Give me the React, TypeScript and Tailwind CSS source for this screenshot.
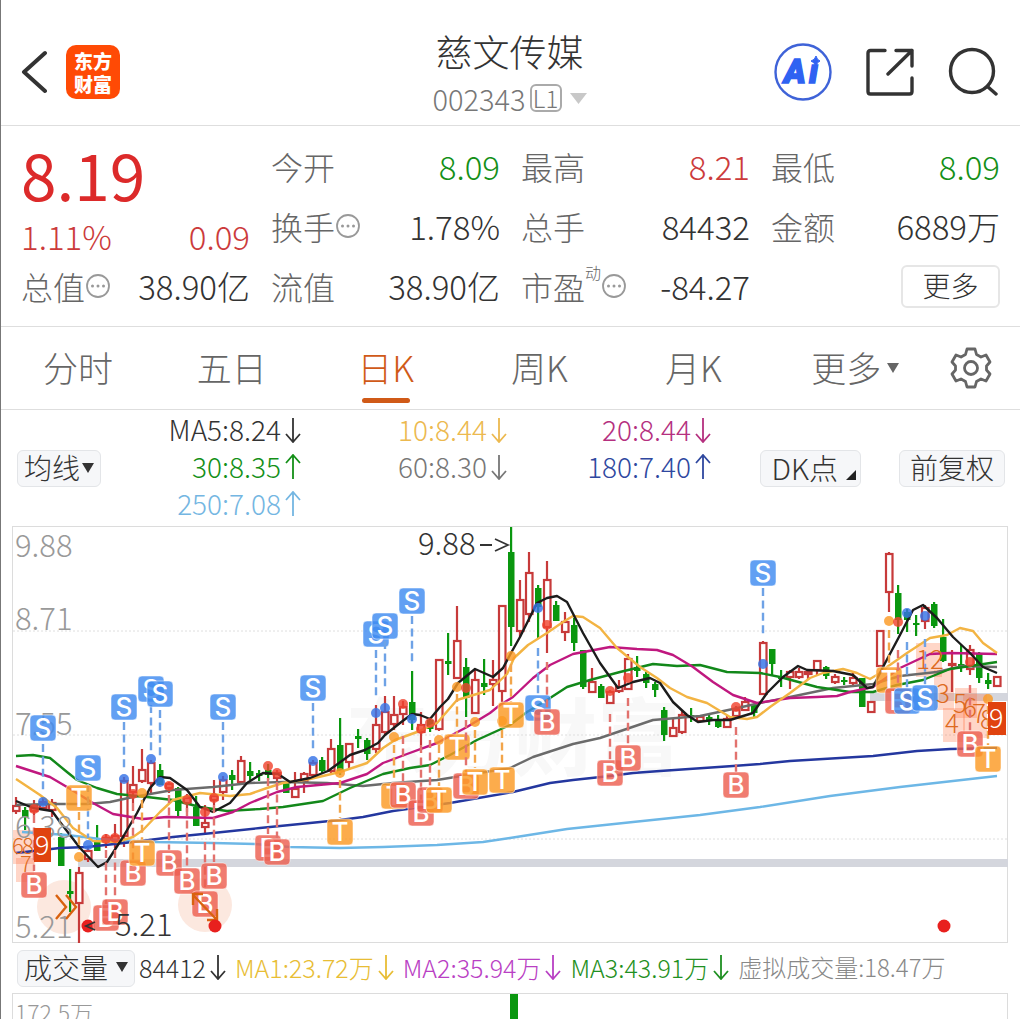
import React from "react";

const FONT = "font-['Noto_Sans_CJK_SC',sans-serif]";

/* ---------- chart data ---------- */

type Kind = "r" | "g";
// x, high, body top, body bottom, low, colour
type Candle = [number, number, number, number, number, Kind];

const candles: Candle[] = [
  [16, 797, 806, 811, 814, "r"],
  [25, 807, 810, 817, 830, "g"],
  [34, 800, 806, 811, 815, "r"],
  [43, 797, 802, 808, 810, "r"],
  [52, 799, 803, 810, 817, "r"],
  [61, 833, 837, 866, 866, "g"],
  [70, 869, 891, 894, 912, "g"],
  [79, 867, 873, 903, 943, "r"],
  [88, 848, 851, 859, 862, "r"],
  [97, 825, 842, 851, 851, "g"],
  [106, 834, 838, 841, 848, "r"],
  [115, 824, 836, 840, 848, "r"],
  [124, 777, 781, 836, 847, "r"],
  [133, 766, 785, 792, 803, "r"],
  [142, 749, 770, 781, 783, "r"],
  [151, 760, 763, 783, 793, "r"],
  [160, 764, 770, 785, 785, "g"],
  [169, 782, 784, 788, 793, "r"],
  [178, 787, 788, 811, 816, "g"],
  [187, 794, 798, 803, 812, "r"],
  [196, 796, 807, 826, 826, "g"],
  [205, 805, 823, 827, 834, "r"],
  [214, 780, 796, 800, 805, "r"],
  [223, 776, 780, 792, 800, "r"],
  [232, 770, 775, 780, 790, "g"],
  [241, 756, 761, 782, 783, "r"],
  [250, 762, 771, 776, 780, "g"],
  [259, 770, 773, 776, 781, "g"],
  [268, 764, 770, 775, 780, "g"],
  [277, 770, 773, 778, 782, "r"],
  [286, 782, 783, 793, 793, "g"],
  [295, 772, 789, 797, 798, "r"],
  [304, 772, 774, 781, 793, "r"],
  [313, 760, 763, 775, 778, "r"],
  [322, 757, 760, 771, 773, "g"],
  [331, 739, 749, 771, 773, "r"],
  [340, 718, 745, 772, 775, "g"],
  [349, 743, 744, 762, 768, "r"],
  [358, 729, 736, 739, 748, "g"],
  [367, 738, 740, 754, 760, "g"],
  [376, 705, 725, 749, 753, "r"],
  [385, 696, 712, 732, 736, "r"],
  [394, 696, 715, 724, 730, "r"],
  [403, 701, 707, 714, 725, "r"],
  [412, 671, 702, 720, 730, "g"],
  [421, 712, 725, 732, 745, "r"],
  [430, 718, 720, 729, 732, "g"],
  [439, 659, 660, 729, 731, "r"],
  [448, 633, 661, 664, 675, "g"],
  [457, 606, 641, 678, 679, "r"],
  [466, 658, 667, 698, 717, "g"],
  [475, 670, 680, 713, 714, "r"],
  [484, 659, 683, 687, 695, "g"],
  [493, 660, 680, 684, 706, "r"],
  [502, 605, 606, 691, 702, "r"],
  [511, 527, 552, 627, 646, "g"],
  [520, 580, 600, 631, 637, "r"],
  [529, 552, 573, 614, 622, "r"],
  [538, 585, 588, 607, 638, "g"],
  [547, 561, 580, 627, 653, "r"],
  [556, 601, 605, 621, 621, "g"],
  [565, 612, 622, 632, 641, "r"],
  [574, 618, 625, 643, 651, "g"],
  [583, 650, 650, 687, 689, "g"],
  [592, 668, 682, 692, 693, "r"],
  [601, 684, 686, 698, 698, "g"],
  [610, 690, 692, 703, 704, "r"],
  [619, 680, 687, 691, 693, "r"],
  [628, 654, 659, 689, 690, "r"],
  [637, 656, 667, 671, 677, "g"],
  [646, 672, 674, 683, 688, "g"],
  [655, 682, 684, 690, 697, "g"],
  [664, 707, 710, 735, 741, "g"],
  [673, 718, 728, 736, 736, "r"],
  [682, 710, 715, 732, 734, "r"],
  [691, 708, 715, 717, 722, "g"],
  [700, 715, 717, 721, 722, "r"],
  [709, 715, 717, 720, 725, "g"],
  [718, 715, 721, 727, 728, "g"],
  [727, 716, 719, 727, 728, "r"],
  [736, 706, 710, 716, 717, "r"],
  [745, 697, 702, 710, 711, "r"],
  [754, 704, 705, 713, 718, "g"],
  [763, 641, 643, 694, 695, "r"],
  [772, 649, 649, 664, 675, "g"],
  [781, 670, 677, 679, 687, "g"],
  [790, 670, 672, 677, 689, "r"],
  [799, 668, 672, 677, 679, "r"],
  [808, 670, 672, 674, 680, "r"],
  [817, 660, 661, 670, 676, "r"],
  [826, 666, 667, 676, 679, "g"],
  [835, 674, 677, 682, 684, "r"],
  [844, 677, 680, 682, 685, "g"],
  [853, 672, 678, 683, 685, "r"],
  [862, 678, 678, 707, 707, "g"],
  [871, 701, 702, 712, 713, "r"],
  [880, 630, 631, 666, 667, "r"],
  [889, 552, 554, 592, 612, "r"],
  [898, 585, 593, 620, 634, "g"],
  [907, 609, 612, 620, 632, "g"],
  [916, 615, 623, 625, 636, "g"],
  [925, 605, 608, 621, 629, "r"],
  [934, 602, 604, 626, 628, "g"],
  [943, 619, 637, 661, 662, "g"],
  [952, 650, 664, 665, 692, "r"],
  [961, 645, 664, 667, 672, "g"],
  [970, 645, 650, 669, 675, "r"],
  [979, 652, 653, 678, 683, "g"],
  [988, 673, 680, 684, 689, "g"],
  [997, 676, 677, 686, 687, "r"],
];

const averages: { color: string; points: string }[] = [
  {
    color: "#6db7e6",
    points:
      "22,832 67,835 100,839 153,842 213,843 255,844 290,847 340,848 383,847 437,845 483,842 510,838 567,829 633,822 700,815 760,807 830,796 900,787 997,776",
  },
  {
    color: "#24379f",
    points:
      "16,853 60,848 87,847 133,842 173,837 213,833 260,828 290,825 340,820 363,817 393,811 450,803 513,792 550,783 573,780 610,776 633,773 660,771 733,766 760,764 790,761 873,756 917,751 950,749 997,748",
  },
  {
    color: "#6b6b6b",
    points:
      "16,805 50,804 87,804 110,802 133,797 173,790 213,787 250,783 283,782 327,783 363,786 393,783 437,780 510,768 533,757 573,744 600,738 653,720 700,716 733,709 760,703 790,697 833,688 873,684 900,676 937,672 963,666 997,667",
  },
  {
    color: "#12881a",
    points:
      "16,756 33,755 50,758 67,772 77,780 97,788 117,794 147,797 173,800 200,807 227,811 260,809 283,807 303,804 323,801 350,788 383,774 410,768 430,765 450,755 477,740 510,725 527,712 547,700 567,687 590,680 620,672 653,664 677,666 700,665 727,672 760,673 780,677 817,687 850,692 873,692 897,685 923,680 950,669 977,665 997,662",
  },
  {
    color: "#c0187f",
    points:
      "16,766 50,777 67,787 93,803 113,814 143,819 167,817 213,818 233,812 250,803 277,792 297,787 340,783 367,774 383,763 407,754 437,743 467,727 490,713 500,705 513,697 533,678 550,665 573,654 610,647 637,649 657,650 673,655 693,667 713,682 733,695 757,703 790,698 817,697 837,696 850,692 873,687 883,680 900,668 930,654 950,653 997,654",
  },
  {
    color: "#f3b443",
    points:
      "16,779 40,795 57,808 73,828 93,841 117,842 133,837 143,830 160,812 173,800 200,793 230,796 250,794 267,788 283,783 310,779 340,772 367,763 383,748 395,740 417,732 437,723 457,700 490,690 507,674 514,658 528,645 547,633 563,622 573,616 583,617 600,628 617,648 640,667 657,678 670,688 687,697 707,703 730,717 747,719 757,717 770,707 790,693 810,678 823,673 843,669 857,673 870,679 880,673 887,667 907,653 930,638 947,635 960,628 973,631 983,643 997,653",
  },
  {
    color: "#1c1c1c",
    points:
      "16,801 33,808 52,811 60,822 80,848 98,867 107,862 123,837 137,813 150,788 160,777 170,778 187,790 200,807 213,812 230,803 247,783 263,773 278,774 290,782 310,778 328,771 350,755 365,750 378,743 385,735 400,723 412,714 420,715 430,719 440,707 448,699 458,683 475,669 493,677 503,668 511,653 520,637 537,603 547,598 557,596 567,602 583,633 600,663 618,688 633,682 650,678 660,683 673,702 687,715 698,722 713,720 730,720 753,713 760,703 767,693 783,677 798,666 807,670 833,671 853,675 867,688 873,687 883,667 900,635 913,610 923,605 937,618 953,637 970,653 983,667 997,673",
  },
];

type Mark = "S" | "T" | "B";
const markFill: Record<Mark, string> = { S: "#3f8bf0", T: "#fb9a24", B: "#ed5f50" };
const dashStroke: Record<Mark, string> = { S: "#6ea2e6", T: "#f2a54a", B: "#e2726e" };

// letter, x, centre y of the badge, start and end of its dashed leader
type MarkRow = [Mark, number, number, number, number];
const marks: MarkRow[] = [
  ["S", 43, 728, 744, 790],
  ["S", 88, 768, 784, 838],
  ["S", 124, 707, 722, 768],
  ["S", 151, 689, 705, 751],
  ["S", 160, 694, 710, 756],
  ["S", 223, 707, 722, 768],
  ["S", 313, 688, 703, 749],
  ["S", 376, 634, 650, 696],
  ["S", 385, 626, 641, 687],
  ["S", 412, 601, 616, 662],
  ["S", 538, 708, 648, 694],
  ["S", 763, 573, 588, 634],
  ["T", 79, 798, 812, 850],
  ["B", 34, 885, 815, 871],
  ["B", 106, 918, 850, 904],
  ["B", 115, 912, 850, 898],
  ["B", 133, 873, 803, 860],
  ["T", 142, 853, 800, 840],
  ["B", 169, 863, 795, 850],
  ["B", 187, 881, 808, 868],
  ["B", 205, 904, 842, 890],
  ["B", 214, 876, 805, 862],
  ["B", 268, 848, 778, 834],
  ["B", 277, 852, 782, 838],
  ["T", 340, 832, 780, 818],
  ["T", 394, 796, 745, 783],
  ["B", 403, 795, 736, 782],
  ["B", 421, 813, 745, 800],
  ["B", 430, 800, 740, 786],
  ["T", 439, 800, 745, 786],
  ["T", 457, 747, 694, 734],
  ["B", 466, 786, 720, 772],
  ["T", 475, 782, 730, 768],
  ["T", 502, 780, 730, 766],
  ["T", 511, 715, 664, 702],
  ["B", 547, 722, 662, 708],
  ["B", 610, 773, 714, 760],
  ["B", 628, 758, 698, 744],
  ["B", 736, 785, 727, 772],
  ["T", 889, 680, 630, 666],
  ["B", 898, 701, 650, 688],
  ["S", 907, 701, 642, 688],
  ["S", 925, 698, 639, 685],
];
const lastMarks: MarkRow[] = [
  ["B", 970, 744, 685, 731],
  ["T", 988, 759, 706, 745],
];

const dots: [number, number, Mark][] = [
  [34, 809, "B"], [43, 802, "S"], [79, 857, "T"], [88, 845, "S"], [106, 839, "B"], [115, 838, "B"],
  [124, 779, "S"], [133, 794, "B"], [142, 793, "T"], [151, 759, "S"], [160, 782, "S"], [169, 786, "B"],
  [187, 800, "B"], [205, 812, "B"], [214, 798, "B"], [223, 777, "S"], [268, 766, "B"], [277, 773, "B"],
  [313, 761, "S"], [340, 773, "T"], [376, 713, "S"], [385, 708, "S"], [394, 737, "T"], [403, 704, "B"],
  [412, 719, "S"], [421, 729, "B"], [430, 723, "B"], [439, 740, "T"], [457, 687, "T"], [466, 688, "B"],
  [475, 722, "T"], [502, 721, "T"], [511, 656, "T"], [538, 608, "S"], [547, 625, "B"], [610, 691, "B"],
  [628, 678, "B"], [736, 707, "B"], [763, 664, "S"], [889, 621, "T"], [898, 622, "B"], [907, 613, "S"],
  [925, 616, "S"], [970, 662, "B"], [988, 699, "T"],
];

const counts: [string, number, number][] = [
  ["12", 916, 669], ["3", 936, 703], ["4", 945, 733], ["5", 953, 713], ["6", 963, 717], ["7", 972, 723], ["8", 980, 729],
];

function Badge({ mark }: { mark: MarkRow }) {
  const [k, x, y, from, to] = mark;
  return (
    <g>
      <line x1={x} x2={x} y1={from} y2={to} stroke={dashStroke[k]} strokeWidth="2.4" strokeDasharray="8 4.4" />
      <rect x={x - 13} y={y - 13} width="26" height="26" rx="4" fill={markFill[k]} fillOpacity="0.82" stroke="#fff" strokeOpacity="0.5" />
      <text x={x} y={y + 9} fontSize="26" textAnchor="middle" fill="#fff" className="font-['Inter',sans-serif] font-medium">
        {k}
      </text>
    </g>
  );
}

function KLineChart() {
  return (
    <svg viewBox="12 526 996 417" className="block h-auto w-full" role="img" aria-label="日K">
      <text x="345" y="769" fontSize="84" fill="#f8f8f8" className="font-bold">东方财富</text>
      {[631, 735, 839].map((y) => (
        <line key={y} x1="13" x2="1008" y1={y} y2={y} stroke="#dedede" strokeDasharray="2 2" />
      ))}
      <rect x="12.5" y="526.5" width="995" height="416" fill="none" stroke="#dcdcdc" />
      <rect x="78" y="859" width="930" height="8" fill="#d4d6dd" />
      <rect x="870" y="693" width="138" height="8" fill="#d4d6dd" />
      <circle cx="64" cy="907" r="27" fill="#fce8df" />
      <circle cx="205" cy="905" r="27" fill="#fce8df" />

      <g fill="#ff6a3a" fillOpacity="0.28">
        <rect x="13" y="830" width="22" height="34" />
        <rect x="16" y="858" width="18" height="24" />
        <rect x="916" y="643" width="26" height="34" />
        <rect x="934" y="670" width="20" height="40" />
        <rect x="943" y="708" width="22" height="34" />
        <rect x="955" y="688" width="22" height="30" />
        <rect x="963" y="694" width="24" height="44" />
      </g>

      {candles.map(([x, hi, top, bot, lo, k]) =>
        k === "g" ? (
          <g key={x} fill="#0a970f">
            <rect x={x - 1} y={hi} width="2.2" height={lo - hi} />
            <rect x={x - 3} y={top} width="6.5" height={bot - top} />
          </g>
        ) : (
          <g key={x} stroke="#c73a3a" fill="#fff" strokeWidth="2.2">
            <line x1={x} x2={x} y1={hi} y2={lo} />
            <rect x={x - 3} y={top} width="6.5" height={bot - top} />
          </g>
        ),
      )}

      {averages.map((a) => (
        <polyline key={a.color} points={a.points} fill="none" stroke={a.color} strokeWidth="2.4" strokeLinejoin="round" />
      ))}

      <g fontSize="31" fill="#999" className="font-light">
        <text x="15" y="557">9.88</text>
        <text x="15" y="630">8.71</text>
        <text x="15" y="735">7.55</text>
        <text x="15" y="838">6.38</text>
        <text x="15" y="938">5.21</text>
      </g>

      {dots.map(([x, y, k]) => (
        <circle
          key={x}
          cx={x}
          cy={y}
          r="5"
          fillOpacity="0.82"
          fill={k === "S" ? "#3673e6" : k === "T" ? "#fb9a24" : "#f0442f"}
        />
      ))}

      <circle cx="88" cy="926" r="6.5" fill="#e8201e" />
      {marks.map((m) => (
        <Badge key={m[0] + m[1]} mark={m} />
      ))}

      <g fontSize="26" fill="#dd6a20" className="font-light">
        <text x="12" y="854" fontSize="22">6</text>
        <text x="22" y="854" fontSize="22">8</text>
        <text x="20" y="872" fontSize="22">7</text>
        {counts.map(([t, x, y]) => (
          <text key={t} x={x} y={y}>{t}</text>
        ))}
      </g>
      {lastMarks.map((m) => (
        <Badge key={m[0] + m[1]} mark={m} />
      ))}
      <rect x="34" y="828" width="17" height="34" fill="#e0430f" />
      <rect x="988" y="702" width="18" height="33" fill="#e0430f" />
      <g fontSize="27" fill="#fff">
        <text x="35" y="855">9</text>
        <text x="989" y="728">9</text>
      </g>

      <g fill="none" stroke="#d9620f" strokeWidth="2.4">
        <path d="M56 895 66 907 56 919M66 895 76 907 66 919" />
        <path d="M193 895 217 920M193 905V894H203M217 909V920H207" />
      </g>
      <circle cx="215" cy="926" r="6.5" fill="#e8201e" />
      <circle cx="944" cy="926" r="6.5" fill="#e8201e" />

      <g fontSize="31" fill="#333" className="font-light">
        <text x="418" y="555">9.88</text>
        <path d="M480 545H492M495 539 508 545 495 551M95 922 86 926 95 930" fill="none" stroke="#333" strokeWidth="1.8" />
        <text x="115" y="936">5.21</text>
      </g>
    </svg>
  );
}

/* ---------- small pieces ---------- */

function More() {
  return (
    <svg viewBox="0 0 26 26" className="size-[26px] shrink-0" aria-hidden="true">
      <circle cx="13" cy="13" r="11" fill="none" stroke="#999" strokeWidth="1.8" />
      <g fill="#999">
        <circle cx="7.5" cy="13" r="1.5" />
        <circle cx="13" cy="13" r="1.5" />
        <circle cx="18.5" cy="13" r="1.5" />
      </g>
    </svg>
  );
}

function Arrow({ up = false }: { up?: boolean }) {
  return (
    <svg viewBox="0 0 16 26" className="h-[26px] w-4 shrink-0" fill="none" stroke="currentColor" strokeWidth="1.8" role="img" aria-label={up ? "↑" : "↓"}>
      {up ? <path d="M8 25V1M1 9 8 1 15 9" /> : <path d="M8 1V25M1 17 8 25 15 17" />}
    </svg>
  );
}

function Down({ className }: { className: string }) {
  return (
    <svg viewBox="0 0 12 12" className={className} fill="currentColor" preserveAspectRatio="none" aria-hidden="true">
      <path d="M0 1H12L6 12Z" />
    </svg>
  );
}

function Quote({ label, value, tone = "text-[#333]", more = false, sup }: { label: string; value: string; tone?: string; more?: boolean; sup?: string }) {
  return (
    <div className="flex h-[60px] items-center justify-between whitespace-nowrap">
      <span className="flex items-center text-[#666]">
        {label}
        {sup && <sup className="top-0 mb-7 text-[16px] leading-4">{sup}</sup>}
        {more && <More />}
      </span>
      <span className={"text-[33px] " + tone}>{value}</span>
    </div>
  );
}

function Average({ text, tone, up }: { text: string; tone: string; up?: boolean }) {
  return (
    <div className={"flex items-center justify-end gap-1 whitespace-nowrap " + tone}>
      {text}
      <Arrow up={up} />
    </div>
  );
}

const chip = "flex h-[37px] items-center rounded-md border border-[#e3e5e8] bg-[#f6f7f9] leading-[32px] pb-[3px] text-[#333] whitespace-nowrap";
const tabs = ["分时", "五日", "日K", "周K", "月K"];

export default function App() {
  return (
    <main className={"border-l border-[#777] bg-white font-light text-[#333] " + FONT}>
      <header className="flex h-[126px] items-center justify-between border-b border-[#dedede] pr-[22px] pl-5">
        <div className="flex flex-1 items-center gap-[19px] pt-[18px]">
          <button aria-label="返回">
            <svg viewBox="0 0 26 44" className="h-11 w-[26px]" fill="none" stroke="#333" strokeWidth="4" strokeLinecap="round" strokeLinejoin="round">
              <path d="M24 3 3 22 24 41" />
            </svg>
          </button>
          <a href="#home" className="grid size-[54px] place-content-center rounded-[10px] bg-[#ff4a05] text-center text-[19px] leading-[23px] font-black text-white">
            <span>东方</span>
            <span>财富</span>
          </a>
        </div>
        <div className="flex flex-col items-center pt-[18px]">
          <h1 className="text-[37px] leading-[52px]">慈文传媒</h1>
          <button className="flex items-center text-[29px] leading-[42px] text-[#777]">
            002343
            <span className="ml-1 flex h-7 w-8 items-center justify-center rounded-md border-2 border-[#aaa] text-[24px] leading-6">L1</span>
            <Down className="ml-2 h-3 w-[17px] text-[#c8c8c8]" />
          </button>
        </div>
        <div className="flex flex-1 items-center justify-end gap-[34px] pt-[18px]">
          <button aria-label="Ai">
            <svg viewBox="0 0 58 58" className="size-[58px]">
              <circle cx="29" cy="29" r="27.5" fill="none" stroke="#3f63d8" strokeWidth="2.4" />
              <g fontSize="33" fill="#2f62f2" stroke="#2f62f2" strokeWidth="1.5" className="font-['Roboto',sans-serif] font-black italic">
                <text x="10" y="40">A</text>
                <text x="35" y="40">ı</text>
              </g>
              <path d="M42 13Q43 17 46 18Q43 19 42 23Q40 19 37 18Q41 17 42 13Z" fill="#2f62f2" stroke="#2f62f2" />
            </svg>
          </button>
          <button aria-label="分享">
            <svg viewBox="0 0 48 48" className="size-12" fill="none" stroke="#333" strokeWidth="3.4" strokeLinecap="round" strokeLinejoin="round">
              <path d="M19 2.500H4.500Q2 2.500 2 5V43.500Q2 46 4.500 46H43.500Q46 46 46 43.500V30M30 2.500H46V18M46 2.500 22 26" />
            </svg>
          </button>
          <button aria-label="搜索">
            <svg viewBox="0 0 50 50" className="size-[50px]" fill="none" stroke="#333" strokeWidth="3.4" strokeLinecap="round">
              <circle cx="24" cy="24" r="21.5" />
              <path d="M40 40 48 47" />
            </svg>
          </button>
        </div>
      </header>

      <section className="grid grid-cols-4 gap-x-[21px] border-b border-[#dedede] pt-[10px] pr-5 pb-[10px] pl-5 text-[32px] leading-[60px]">
        <div className="flex flex-col">
          <strong className="h-20 text-[64px] leading-[74px] font-normal text-[#dc2a2a]">8.19</strong>
          <div className="flex h-10 items-center justify-between text-[33px] leading-10 text-[#cc3b3b]">
            <span>1.11%</span>
            <span>0.09</span>
          </div>
          <Quote label="总值" value="38.90亿" more />
        </div>
        <div>
          <Quote label="今开" value="8.09" tone="text-[#149018]" />
          <Quote label="换手" value="1.78%" more />
          <Quote label="流值" value="38.90亿" />
        </div>
        <div>
          <Quote label="最高" value="8.21" tone="text-[#cc3b3b]" />
          <Quote label="总手" value="84432" />
          <Quote label="市盈" value="-84.27" more sup="动" />
        </div>
        <div>
          <Quote label="最低" value="8.09" tone="text-[#149018]" />
          <Quote label="金额" value="6889万" />
          <div className="flex h-[60px] items-center justify-end">
            <button className="flex h-[43px] w-[99px] items-center justify-center rounded-md border-2 border-[#e6e6e6] pb-0.5 text-[28px]">更多</button>
          </div>
        </div>
      </section>

      <nav className="flex h-[83px] border-b border-[#dedede] pr-[18px] text-[35px] text-[#666]">
        {tabs.map((t) => (
          <button
            key={t}
            className={
              "relative flex flex-[154] items-center justify-center pb-0.5 " +
              (t === "日K"
                ? "text-[#d05a18] after:absolute after:bottom-[6px] after:h-[5px] after:w-12 after:rounded-full after:bg-[#d05a18]"
                : "")
            }
          >
            {t}
          </button>
        ))}
        <button className="flex flex-[170] items-center justify-center gap-1.5 pb-0.5">
          更多
          <Down className="h-[11px] w-3" />
        </button>
        <button aria-label="设置" className="flex flex-[62] items-center justify-center">
          <svg viewBox="0 0 42 42" className="size-[42px]" fill="none" stroke="#666" strokeWidth="2.8" strokeLinejoin="round">
            <path d="M17 2H25L26.500 7.500 31 10 36 8 40 15 36.500 19V23L40 27 36 34 31 32 26.500 34.500 25 40H17L15.500 34.500 11 32 6 34 2 27 5.500 23V19L2 15 6 8 11 10 15.500 7.500Z" />
            <circle cx="21" cy="21" r="6.5" />
          </svg>
        </button>
      </nav>

      <section className="flex items-center justify-between pt-px pr-[15px] pb-1 pl-4 text-[28px]">
        <button className={chip + " mt-1 gap-0.5 px-1.5"}>
          均线
          <Down className="h-[11px] w-3" />
        </button>
        <div className="grid flex-1 grid-cols-[200px_206px_204px] text-[28px] leading-[37px]">
          <Average text="MA5:8.24" tone="text-[#333]" />
          <Average text="10:8.44" tone="text-[#ecb94f]" />
          <Average text="20:8.44" tone="text-[#b5307f]" />
          <Average text="30:8.35" tone="text-[#149018]" up />
          <Average text="60:8.30" tone="text-[#777]" />
          <Average text="180:7.40" tone="text-[#2f489f]" up />
          <Average text="250:7.08" tone="text-[#74b6e2]" up />
        </div>
        <button className={chip + " mt-1 mr-[38px] gap-2 pr-1 pl-2.5 text-[29px]"}>
          DK点
          <svg viewBox="0 0 10 10" className="mt-4 size-2.5" fill="#222" aria-hidden="true">
            <path d="M10 0V10H0Z" />
          </svg>
        </button>
        <button className={chip + " mt-1 px-2.5"}>前复权</button>
      </section>

      <section className="pr-3 pl-[11px]">
        <KLineChart />
        <div className="flex h-[50px] items-center pl-[5px] text-[25px] leading-[30px] whitespace-nowrap">
          <button className={chip + " mr-1 w-[118px] justify-between px-1.5 text-[28px]"}>
            成交量
            <Down className="h-[11px] w-3" />
          </button>
          <div className="flex flex-1 items-center gap-[9px] pb-[3px]">
            <span className="flex items-center gap-1">84412<Arrow /></span>
            <span className="flex items-center gap-1 text-[#e8bd35]">MA1:23.72万<Arrow /></span>
            <span className="flex items-center gap-1 text-[#b940c4]">MA2:35.94万<Arrow /></span>
            <span className="flex items-center gap-1 text-[#1f9022]">MA3:43.91万<Arrow /></span>
            <span className="text-[24px] text-[#888]">虚拟成交量:18.47万</span>
          </div>
        </div>
        <div className="relative h-[26px] overflow-hidden border border-b-0 border-[#dcdcdc] pt-1 pl-[2px] text-[23px] leading-7 text-[#999]">
          172.5万
          <span className="absolute top-0 left-1/2 h-full w-2 bg-[#0a970f]" />
        </div>
      </section>
    </main>
  );
}
